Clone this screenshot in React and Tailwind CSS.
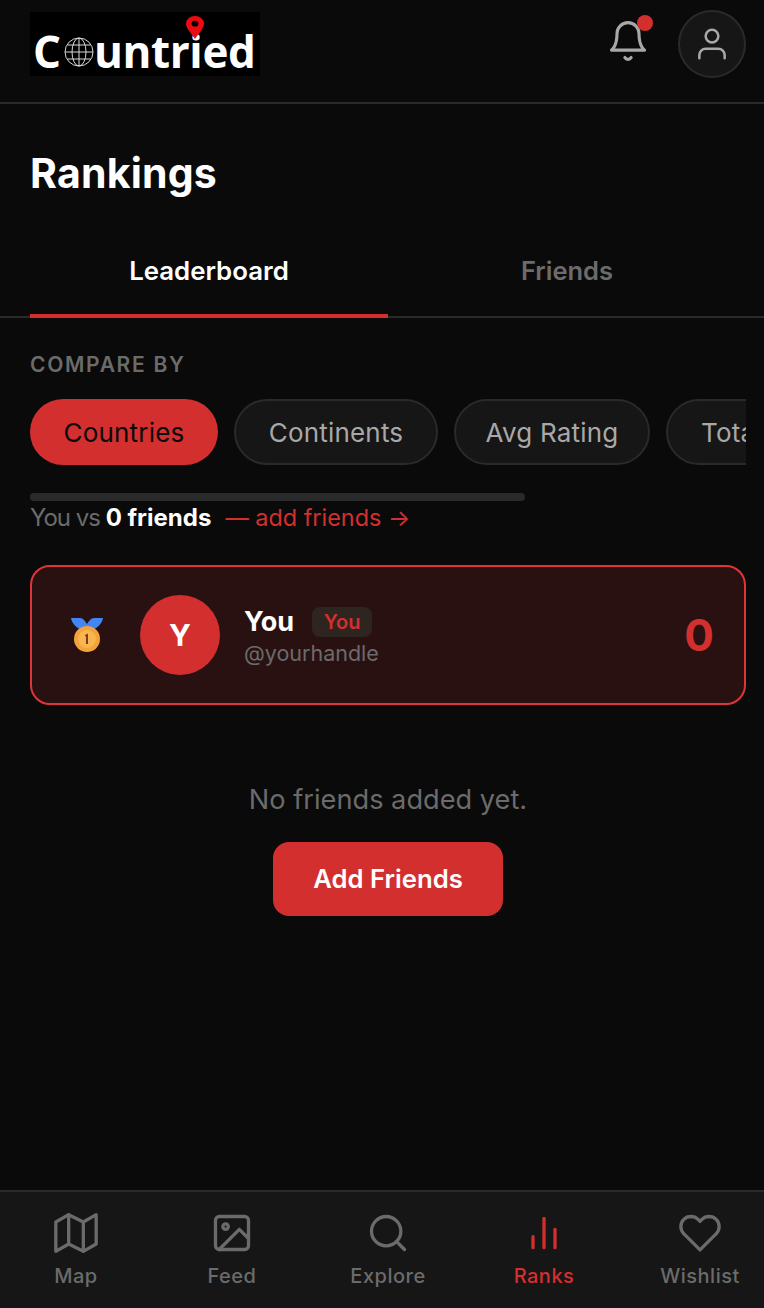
import { FiBell, FiUser, FiMap, FiImage, FiSearch, FiHeart, FiBarChart2 } from "react-icons/fi";

const FONT = "font-['Inter','Noto_Sans',sans-serif]";

const PILLS = [
  { label: "Countries", w: "w-[188px]", active: true },
  { label: "Continents", w: "w-[204px]" },
  { label: "Avg Rating", w: "w-[196px]" },
  { label: "Total", w: "w-[160px]" },
];

function Logo() {
  return (
    <div className="relative flex h-16 w-[230px] items-center bg-black pl-[3px] pt-[13px] font-['Open_Sans',sans-serif] text-[44px] font-bold leading-none text-white">
      <span>C</span>
      <svg width="30" height="30" viewBox="0 0 30 30" fill="none" stroke="#d8d8d8" strokeWidth="1" className="ml-[3px] mt-[3px]">
        <circle cx="15" cy="15" r="14" />
        <ellipse cx="15" cy="15" rx="7" ry="14" />
        <path d="M15 1v28M1 15h28M3.500 8h23M3.500 22h23" />
      </svg>
      <span className="tracking-[-0.4px]">untried</span>
      <svg width="18" height="23" viewBox="0 0 16 24" preserveAspectRatio="none" className="absolute left-[156px] top-[4px]">
        <path fillRule="evenodd" fill="#ee0a12" d="M8 0a8 8 0 0 1 8 8c0 5-5 10-8 16C5 18 0 13 0 8a8 8 0 0 1 8-8zm0 5a3 3 0 1 0 0 6 3 3 0 0 0 0-6z" />
      </svg>
    </div>
  );
}

function Medal() {
  return (
    <svg width="32" height="36" viewBox="0 0 32 36">
      <path d="M0 1h9c3 0 5 3 7 6 2-3 4-6 7-6h9c-1 6-6 10-12 13h-8C6 11 1 7 0 1z" fill="#4285f4" />
      <circle cx="16" cy="22" r="13" fill="#f4a23c" />
      <circle cx="16" cy="22" r="9" fill="#f9b64f" />
      <path d="M14 18l3-1.500V27h-2v-8l-1 .5z" fill="#7a3b2e" />
    </svg>
  );
}

function NavItem({ icon, label, active }) {
  return (
    <div className={`flex w-[156px] shrink-0 flex-col items-center gap-[7px] ${active ? "text-[#d32f2f]" : "text-[#6b6b6b]"}`}>
      {icon}
      <span className="text-[20px] font-medium leading-7 tracking-[0.5px]">{label}</span>
    </div>
  );
}

export default function App() {
  return (
    <div className="h-screen w-full overflow-hidden bg-[#0a0a0a]">
      <div className={`flex h-full w-[776px] flex-col ${FONT}`}>
        {/* Header */}
        <header className="flex h-[104px] shrink-0 items-start justify-between border-b-2 border-[#2a2a2a] px-[30px] pt-3">
          <Logo />
          <div className="flex items-center gap-[25px]">
            <div className="relative -mt-[2px] flex h-[68px] w-[50px] items-center justify-center pb-[6px]">
              <FiBell size={44} strokeWidth={1.7} className="text-[#a8a8a8]" />
              <span className="absolute right-0 top-[5px] h-4 w-4 rounded-full bg-[#d32f2f]" />
            </div>
            <div className="-mt-[2px] flex h-[68px] w-[68px] items-center justify-center rounded-full border-2 border-[#2a2a2a] bg-[#161616]">
              <FiUser size={38} strokeWidth={1.6} className="text-[#a8a8a8]" />
            </div>
          </div>
        </header>

        {/* Title */}
        <h1 className="pl-[30px] pt-[42px] text-[41px] font-bold leading-[54px] tracking-[0.2px] text-white">Rankings</h1>

        {/* Tabs */}
        <div className="mt-[30px] flex h-[88px] shrink-0 border-b-2 border-[#2a2a2a] px-[30px]">
          <div className="-mb-[2px] flex flex-1 items-center justify-center border-b-4 border-[#d32f2f] pb-[2px] text-[25.8px] font-semibold text-white">Leaderboard</div>
          <div className="flex flex-1 items-center justify-center pb-[4px] text-[25.5px] font-semibold text-[#6b6b6b]">Friends</div>
        </div>

        {/* Compare by */}
        <div className="px-[30px] pt-[33px]">
          <div className="text-[21px] font-semibold leading-7 tracking-[1.7px] text-[#6b6b6b]">COMPARE BY</div>
          <div className="mt-5 flex gap-4 overflow-hidden">
            {PILLS.map((p) => (
              <div
                key={p.label}
                className={`flex h-[66px] shrink-0 items-center rounded-full text-[26px] tracking-[0.2px] ${p.w} ${
                  p.active ? "bg-[#d32f2f] text-[#0a0a0a]" : "border-2 border-[#2a2a2a] bg-[#161616] text-[#a8a8a8]"
                } ${p.label === "Total" ? "justify-start pl-[33px]" : "justify-center"}`}
              >
                {p.label}
              </div>
            ))}
          </div>

          <div className="mt-7 h-2 w-[495px] rounded-full bg-[#2a2a2a]" />
          <div className="mt-[1px] flex h-8 items-center text-[24px]">
            <span className="tracking-[-1px] text-[#6b6b6b]">You vs&nbsp;</span>
            <span className="font-bold text-white">0 friends</span>
            <span className="ml-[14px] text-[23.4px] text-[#d32f2f]">— add friends →</span>
          </div>

          {/* Own row */}
          <div className="mt-[31px] flex h-[140px] items-center rounded-[20px] border-2 border-[#e03535] bg-[#291112] pl-[39px] pr-[30px]">
            <Medal />
            <div className="ml-[37px] flex h-20 w-20 items-center justify-center rounded-full bg-[#d32f2f] text-[30px] font-bold text-white">Y</div>
            <div className="ml-6 pt-[3px]">
              <div className="flex items-center gap-[18px]">
                <span className="text-[27px] font-bold leading-8 text-white">You</span>
                <span className="flex h-[30px] w-[60px] items-center justify-center rounded-lg bg-[#2e2420] text-[20px] font-semibold text-[#d32f2f]">You</span>
              </div>
              <div className="text-[21.500px] leading-[30px] text-[#6b6b6b]">@yourhandle</div>
            </div>
            <div className="ml-auto text-[44px] font-bold text-[#d32f2f]">0</div>
          </div>
        </div>

        {/* Empty state */}
        <div className="flex flex-col items-center pt-[75px]">
          <p className="text-[27.200px] leading-10 text-[#6b6b6b]">No friends added yet.</p>
          <button className="mt-[22px] h-[74px] w-[230px] rounded-2xl bg-[#d32f2f] text-[25.700px] font-semibold text-white">Add Friends</button>
        </div>

        {/* Bottom nav */}
        <nav className="mt-auto flex h-[118px] shrink-0 items-start justify-center border-t-2 border-[#2a2a2a] bg-[#161616] pt-[19px]">
          <NavItem label="Map" icon={<FiMap size={44} strokeWidth={1.8} />} />
          <NavItem label="Feed" icon={<FiImage size={44} strokeWidth={1.8} />} />
          <NavItem label="Explore" icon={<FiSearch size={44} strokeWidth={1.8} />} />
          <NavItem label="Ranks" active icon={<FiBarChart2 size={44} strokeWidth={1.8} />} />
          <NavItem label="Wishlist" icon={<FiHeart size={44} strokeWidth={1.8} />} />
        </nav>
      </div>
    </div>
  );
}
